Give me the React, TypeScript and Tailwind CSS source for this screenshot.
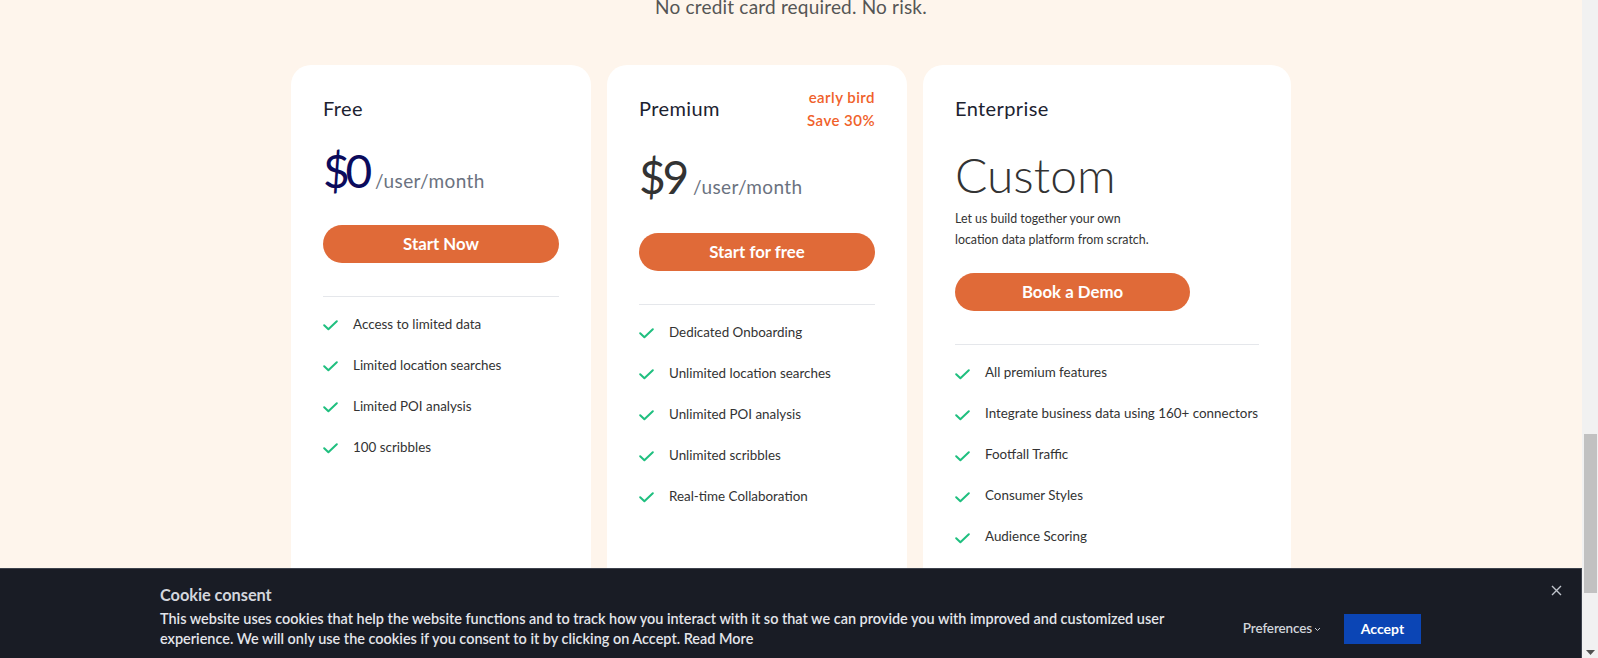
import React from "react";

const font = { fontFamily: "Lato, 'Open Sans', sans-serif" };

function Check() {
  return (
    <svg width="15" height="11" viewBox="0 0 15 11" fill="none" className="shrink-0 mt-[3px]">
      <path d="M1.2 5.2 L5.4 9.3 L13.8 1.2" stroke="#1fbf7f" strokeWidth="2" strokeLinecap="round" strokeLinejoin="round" />
    </svg>
  );
}

function Features({ items }: { items: string[] }) {
  return (
    <ul className="mt-[7px]">
      {items.map((t) => (
        <li key={t} className="h-[41px] flex items-center gap-[15px] text-[13.4px] text-[#333333] whitespace-nowrap">
          <Check />
          <span>{t}</span>
        </li>
      ))}
    </ul>
  );
}

function Btn({ label }: { label: string }) {
  return (
    <button className="h-[38px] w-full rounded-full bg-[#e06a38] text-white text-[16.8px] font-bold">
      {label}
    </button>
  );
}

export default function App() {
  return (
    <div className="w-[1598px] h-[658px] overflow-hidden flex bg-[#fef5ec]" style={font}>
      <div className="relative flex-1 h-full">
        <p className="-mt-[5px] h-[24px] leading-[24px] text-center text-[19px] text-[#555555] tracking-[0.01em]">
          No credit card required. No risk.
        </p>
        <div className="mt-[46px] flex justify-center gap-4 items-start">
          {/* Free */}
          <div className="w-[300px] h-[640px] rounded-[20px] bg-white px-8 pt-6">
            <div className="h-[38px] leading-[38px] text-[20px] text-[#1c2230] tracking-[0.02em]">Free</div>
            <div className="mt-5 flex items-baseline gap-[7px]">
              <span className="text-[46px] leading-[48px] text-[#0b0b5c] tracking-[-0.09em]">$0</span>
              <span className="text-[19px] text-[#6b7280] tracking-[0.02em]">/user/month</span>
            </div>
            <div className="mt-[29px]"><Btn label="Start Now" /></div>
            <div className="mt-[33px] border-t border-[#e5e7eb]" />
            <Features items={["Access to limited data", "Limited location searches", "Limited POI analysis", "100 scribbles"]} />
          </div>
          {/* Premium */}
          <div className="w-[300px] h-[640px] rounded-[20px] bg-white px-8 pt-6">
            <div className="h-[44px] flex justify-between items-start">
              <div className="leading-[38px] text-[20px] text-[#1c2230] tracking-[0.02em]">Premium</div>
              <div className="-mt-[3px] text-right text-[15px] leading-[23px] font-semibold text-[#f0612a] tracking-[0.03em]">
                <div>early bird</div>
                <div>Save 30%</div>
              </div>
            </div>
            <div className="mt-5 flex items-baseline gap-[7px]">
              <span className="text-[46px] leading-[48px] text-[#333333] tracking-[-0.07em]">$9</span>
              <span className="text-[19px] text-[#6b7280] tracking-[0.02em]">/user/month</span>
            </div>
            <div className="mt-[31px]"><Btn label="Start for free" /></div>
            <div className="mt-[33px] border-t border-[#e5e7eb]" />
            <Features items={["Dedicated Onboarding", "Unlimited location searches", "Unlimited POI analysis", "Unlimited scribbles", "Real-time Collaboration"]} />
          </div>
          {/* Enterprise */}
          <div className="w-[368px] h-[640px] rounded-[20px] bg-white px-8 pt-6">
            <div className="h-[38px] leading-[38px] text-[20px] text-[#1c2230] tracking-[0.02em]">Enterprise</div>
            <div className="mt-[24px] text-[48px] leading-[48px] font-light text-[#333333]">Custom</div>
            <div className="mt-[9px] text-[12.4px] leading-[21px] text-[#333333]">
              Let us build together your own
              <br />
              location data platform from scratch.
            </div>
            <div className="mt-[23px] w-[235px]"><Btn label="Book a Demo" /></div>
            <div className="mt-[33px] border-t border-[#e5e7eb]" />
            <Features items={["All premium features", "Integrate business data using 160+ connectors", "Footfall Traffic", "Consumer Styles", "Audience Scoring"]} />
          </div>
        </div>

        {/* Cookie banner */}
        <div className="absolute left-0 right-0 bottom-0 h-[90px] bg-[#191c25] border-t border-r border-[#3d424d] flex">
          <div className="pl-[160px] pt-[16px]">
            <div className="text-[16.4px] leading-[20px] font-bold text-[#d3d6dc] tracking-[-0.005em]">Cookie consent</div>
            <div className="mt-[4px] text-[14.45px] leading-[20px] font-semibold text-[#e3e5ea]">
              <div className="whitespace-nowrap">This website uses cookies that help the website functions and to track how you interact with it so that we can provide you with improved and customized user</div>
              <div className="whitespace-nowrap">experience. We will only use the cookies if you consent to it by clicking on Accept. Read More</div>
            </div>
          </div>
          <div className="flex-1" />
          <div className="flex items-center gap-[23px] pt-[30px] pr-[160px]">
            <div className="flex items-center gap-[2px] text-[13.5px] font-semibold text-[#d1d5db] tracking-[-0.01em]">
              Preferences
              <svg width="7" height="5" viewBox="0 0 7 5" className="mt-[2px]"><path d="M1 1 L3.5 3.5 L6 1" stroke="#c7cbd2" strokeWidth="1" fill="none" /></svg>
            </div>
            <button className="w-[77px] h-[30px] bg-[#0b45b5] text-white text-[14px] font-bold">Accept</button>
          </div>
          <div className="absolute right-[19px] top-[16px]">
            <svg width="11" height="11" viewBox="0 0 11 11"><path d="M1 1 L10 10 M10 1 L1 10" stroke="#c0c4cc" strokeWidth="1.4" /></svg>
          </div>
        </div>
      </div>
      {/* scrollbar */}
      <div className="w-[16px] h-full bg-[#f1f1f1] flex flex-col items-center">
        <div className="h-[434px]" />
        <div className="w-[13px] h-[159px] bg-[#c1c1c1]" />
        <div className="flex-1" />
        <svg width="9" height="5" viewBox="0 0 9 5" className="mb-[3px]"><path d="M0 0 H9 L4.5 5 Z" fill="#505050" /></svg>
      </div>
    </div>
  );
}
